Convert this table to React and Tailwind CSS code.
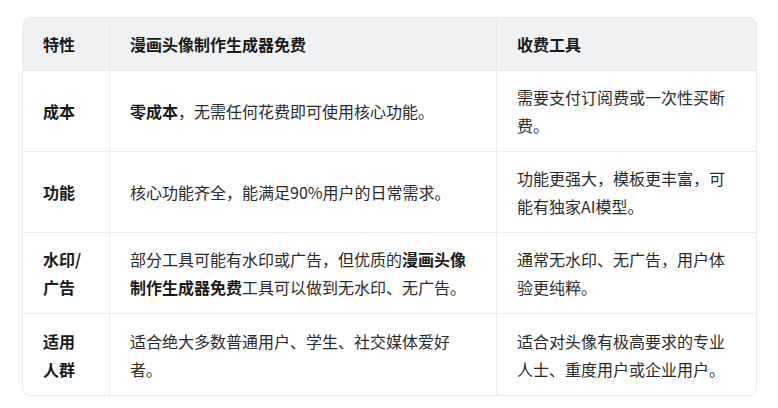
export default function App() {
  const rows = [
    {
      k: "成本",
      a: (
        <>
          <b className="font-bold text-[#1a1a1a]">零成本</b>，无需任何花费即可使用核心功能。
        </>
      ),
      b: "需要支付订阅费或一次性买断费。",
    },
    {
      k: "功能",
      a: "核心功能齐全，能满足90%用户的日常需求。",
      b: "功能更强大，模板更丰富，可能有独家AI模型。",
    },
    {
      k: "水印/广告",
      a: (
        <>
          部分工具可能有水印或广告，但优质的
          <b className="font-bold text-[#1a1a1a]">漫画头像制作生成器免费</b>
          工具可以做到无水印、无广告。
        </>
      ),
      b: "通常无水印、无广告，用户体验更纯粹。",
    },
    {
      k: "适用人群",
      a: "适合绝大多数普通用户、学生、社交媒体爱好者。",
      b: "适合对头像有极高要求的专业人士、重度用户或企业用户。",
    },
  ];
  return (
    <div
      className="w-[778px] h-[408px] bg-white pt-[17px] pl-[22px]"
      style={{ fontFamily: '"Noto Sans CJK SC", "Noto Sans", sans-serif' }}
    >
      <div className="w-[735px] border border-[#e8e9eb] rounded-[8px] overflow-hidden text-[16px] leading-[28px] text-[#2b2b2b]">
        <div className="flex h-[53px] bg-[#f0f1f3] border-b border-[#e8e9eb] font-bold text-[#1a1a1a]">
          <div className="w-[87px] pl-5 pr-6 flex items-center border-r border-[#e8e9eb]">特性</div>
          <div className="w-[387px] px-5 flex items-center border-r border-[#e8e9eb]">漫画头像制作生成器免费</div>
          <div className="flex-1 px-5 flex items-center">收费工具</div>
        </div>
        {rows.map((r, i) => (
          <div
            key={i}
            className={"flex h-[81px] " + (i < rows.length - 1 ? "border-b border-[#ececee]" : "")}
          >
            <div className="w-[87px] pl-5 pr-[21px] flex items-center border-r border-[#ececee] font-bold text-[#1a1a1a]">
              <span>{r.k}</span>
            </div>
            <div className="w-[387px] px-5 flex items-center border-r border-[#ececee]">
              <span>{r.a}</span>
            </div>
            <div className="flex-1 px-5 flex items-center">
              <span>{r.b}</span>
            </div>
          </div>
        ))}
      </div>
    </div>
  );
}
